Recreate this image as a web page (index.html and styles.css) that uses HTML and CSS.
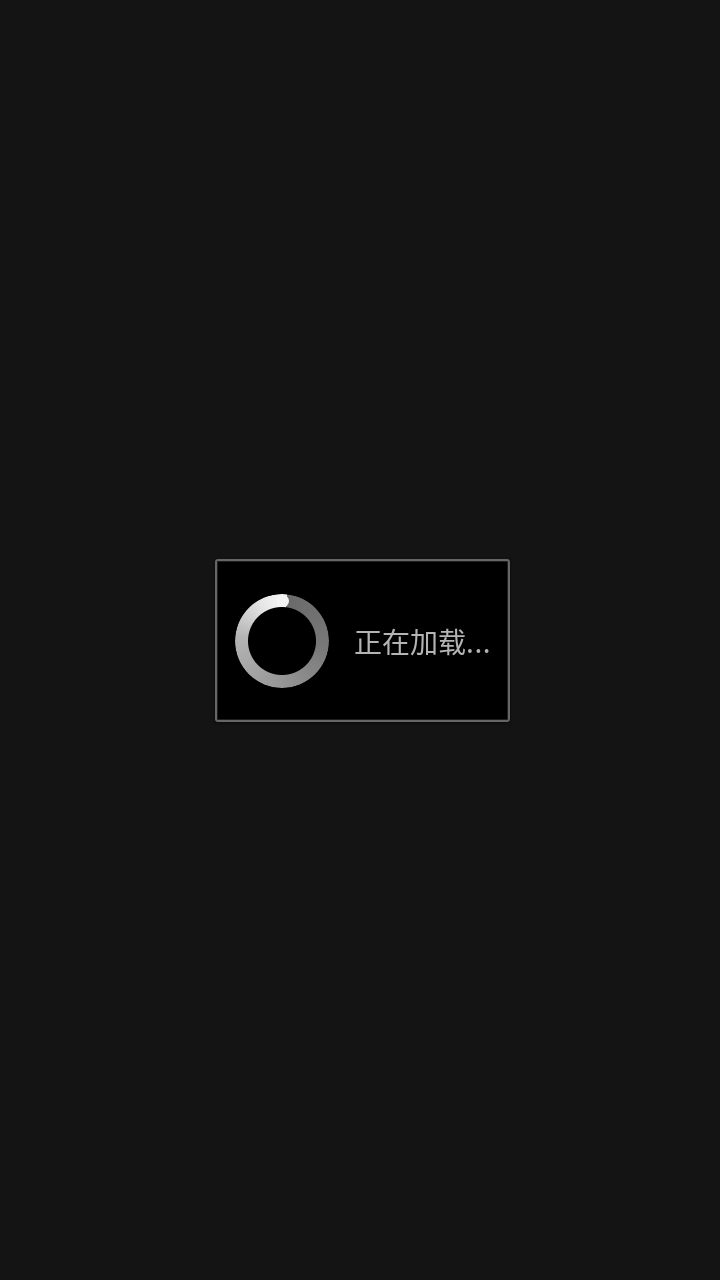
FILE: index.html
```html
<!DOCTYPE html>
<html lang="zh-CN">
<head>
  <meta charset="UTF-8" />
  <title>正在加载</title>
  <link rel="stylesheet" href="styles.css">
</head>
<body>
  <div class="dialog">
    <div class="spinner">
      <div class="spinner-head"></div>
    </div>
    <div class="message">正在加载<span class="dots">...</span></div>
  </div>
</body>
</html>
```

FILE: styles.css
```css
* {
  box-sizing: border-box;
}

html, body {
  height: 100%;
}

body {
  margin: 0;
  padding-left: 5px;
  background-color: #141414;
  display: flex;
  align-items: center;
  justify-content: center;
  font-family: "Noto Sans CJK SC", "Noto Sans", sans-serif;
}

.dialog {
  width: 295px;
  height: 163px;
  padding: 2px 0 0 18px;
  display: flex;
  align-items: center;
  gap: 25px;
  background-color: #000;
  border: 2px solid #666;
  border-radius: 3px;
  box-shadow: inset 0 0 0 1px rgba(102,102,102,0.3), 0 1px 3px rgba(0,0,0,0.5);
}

.spinner {
  position: relative;
  flex: none;
  width: 94px;
  height: 94px;
  border-radius: 50%;
  background: conic-gradient(from 6deg, #6a6a6a 0deg, #787878 90deg, #989898 180deg, #b4b4b4 270deg, #e6e6e6 325deg, #f8f8f8 360deg);
  -webkit-mask: radial-gradient(circle closest-side, transparent 33.5px, #000 34.5px);
  mask: radial-gradient(circle closest-side, transparent 33.5px, #000 34.5px);
  filter: blur(0.6px);
}

.spinner-head {
  position: absolute;
  top: 1px;
  left: 42px;
  width: 12px;
  height: 12px;
  border-radius: 50%;
  background-color: #f4f4f4;
}

.message {
  color: #b4b4b4;
  font-size: 28px;
  white-space: nowrap;
  will-change: transform;
}

.dots {
  letter-spacing: 0.6px;
}
```
